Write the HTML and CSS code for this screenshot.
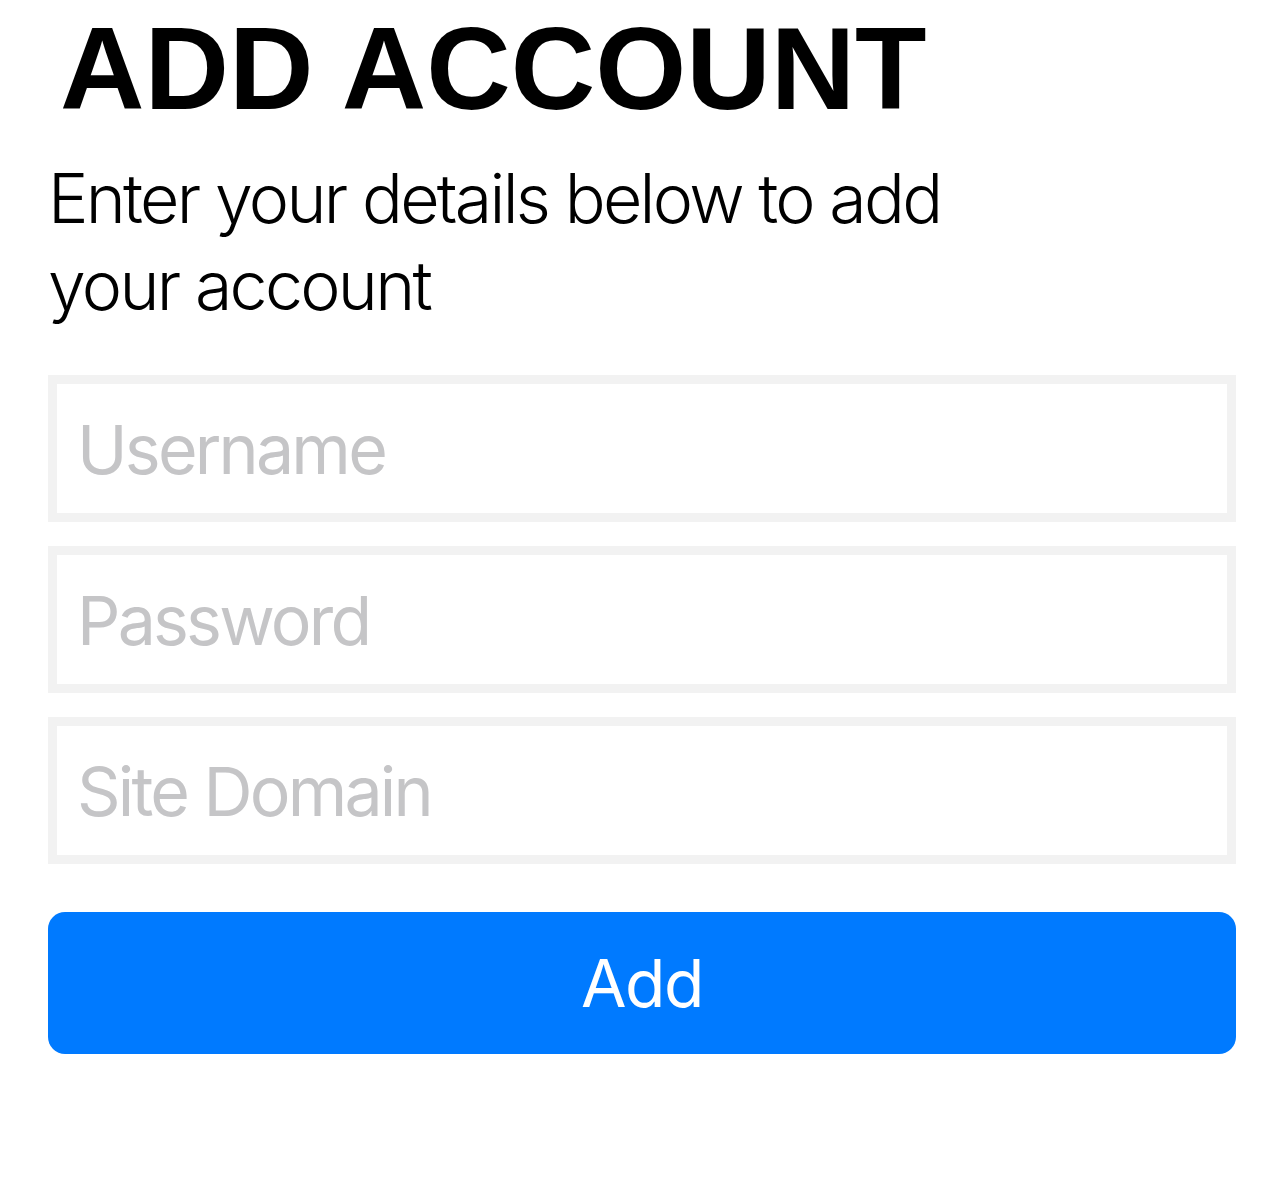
FILE: index.html
```html
<!DOCTYPE html>
<html lang="en">
<head>
<meta charset="utf-8">
<title>Add Account</title>
<link rel="stylesheet" href="styles.css">
</head>
<body>
<main class="screen">
  <h1 class="title">ADD ACCOUNT</h1>
  <p class="subtitle">Enter your details below to add<br>your account</p>
  <form class="form">
    <input class="field" type="text" placeholder="Username">
    <input class="field" type="password" placeholder="Password">
    <input class="field" type="text" placeholder="Site Domain">
    <button class="add-btn" type="button">Add</button>
  </form>
</main>
</body>
</html>
```

FILE: styles.css
```css
html, body {
  margin: 0;
  padding: 0;
  background: #ffffff;
}

.screen {
  padding: 4px 48px 0 48px;
  display: flex;
  flex-direction: column;
}

.title {
  margin: 0;
  padding-left: 12px;
  font-family: "Liberation Sans", Arial, sans-serif;
  font-weight: 700;
  font-size: 117px;
  line-height: 130px;
  color: #000000;
}

.subtitle {
  margin: 21px 0 0 0;
  font-family: Inter, "Noto Sans", sans-serif;
  font-weight: 300;
  font-size: 68px;
  line-height: 87px;
  letter-spacing: -2.7px;
  color: #000000;
}

.form {
  margin-top: 46px;
  display: flex;
  flex-direction: column;
  gap: 24px;
}

.field {
  box-sizing: border-box;
  height: 147px;
  width: 100%;
  margin: 0;
  border: 9px solid #f2f2f2;
  border-radius: 0;
  padding: 0 20px;
  background: #ffffff;
  font-family: Inter, "Noto Sans", sans-serif;
  font-weight: 400;
  font-size: 68px;
  letter-spacing: -2.8px;
  color: #000000;
  outline: none;
}

.field::placeholder {
  color: #c5c5c7;
  opacity: 1;
}

.add-btn {
  margin-top: 24px;
  height: 142px;
  width: 100%;
  border: none;
  border-radius: 17px;
  background: #007aff;
  color: #ffffff;
  font-family: Inter, "Noto Sans", sans-serif;
  font-weight: 400;
  font-size: 66px;
  letter-spacing: -1.5px;
  cursor: pointer;
}
```
